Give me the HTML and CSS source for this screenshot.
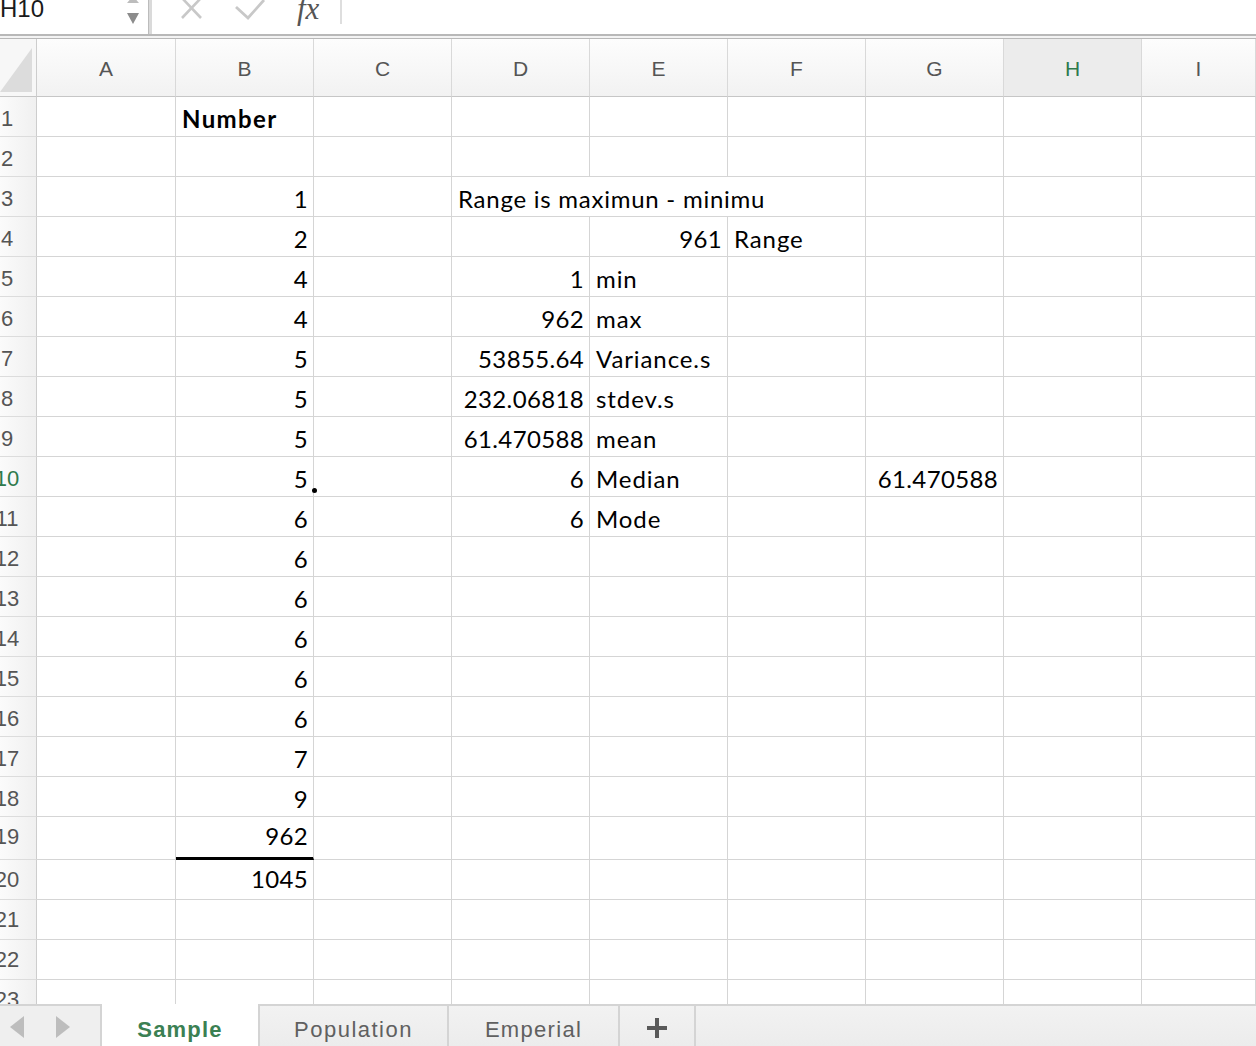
FILE: index.html
```html
<!DOCTYPE html>
<html>
<head>
<meta charset="utf-8">
<title>Sheet</title>
<link rel="stylesheet" href="styles.css">
</head>
<body>
<div class="fbar">
  <div class="namebox">
    <span class="nb-text">H10</span>
    <svg class="nb-arrows" width="14" height="26" viewBox="0 0 14 26"><polygon points="1,3 13,3 7,-4" fill="#bdbdbd"/><polygon points="1,13 13,13 7,24" fill="#8c8c8c"/></svg>
  </div>
  <div class="vsep"></div>
  <svg class="ic-x" width="24" height="22" viewBox="0 0 24 22"><path d="M2 -2 L21 18 M21 -2 L2 18" stroke="#c8c8c8" stroke-width="2.6" fill="none"/></svg>
  <svg class="ic-ok" width="30" height="22" viewBox="0 0 30 22"><path d="M1 7 L13 18 L29 0" stroke="#c8c8c8" stroke-width="2.8" fill="none"/></svg>
  <span class="fx">fx</span>
  <div class="vsep2"></div>
  <div class="finput"></div>
</div>
<div class="divider"></div>
<div class="sheet">
  <div class="r hd">
    <div class="corner"><svg width="36" height="57" viewBox="0 0 36 57"><polygon points="0,53 32,53 32,9" fill="#dcdcdc"/></svg></div>
    <div>A</div><div>B</div><div>C</div><div>D</div><div>E</div><div>F</div><div>G</div><div class="sel">H</div><div>I</div>
  </div>
  <div class="r"><div class="rh"><span>1</span></div><div></div><div class="bold">Number</div><div></div><div></div><div></div><div></div><div></div><div></div><div></div></div>
  <div class="r"><div class="rh"><span>2</span></div><div></div><div></div><div></div><div></div><div></div><div></div><div></div><div></div><div></div></div>
  <div class="r"><div class="rh"><span>3</span></div><div></div><div class="n">1</div><div></div><div class="span3">Range is maximun - minimu</div><div></div><div></div><div></div></div>
  <div class="r"><div class="rh"><span>4</span></div><div></div><div class="n">2</div><div></div><div></div><div class="n">961</div><div>Range</div><div></div><div></div><div></div></div>
  <div class="r"><div class="rh"><span>5</span></div><div></div><div class="n">4</div><div></div><div class="n">1</div><div>min</div><div></div><div></div><div></div><div></div></div>
  <div class="r"><div class="rh"><span>6</span></div><div></div><div class="n">4</div><div></div><div class="n">962</div><div>max</div><div></div><div></div><div></div><div></div></div>
  <div class="r"><div class="rh"><span>7</span></div><div></div><div class="n">5</div><div></div><div class="n">53855.64</div><div>Variance.s</div><div></div><div></div><div></div><div></div></div>
  <div class="r"><div class="rh"><span>8</span></div><div></div><div class="n">5</div><div></div><div class="n">232.06818</div><div>stdev.s</div><div></div><div></div><div></div><div></div></div>
  <div class="r"><div class="rh"><span>9</span></div><div></div><div class="n">5</div><div></div><div class="n">61.470588</div><div>mean</div><div></div><div></div><div></div><div></div></div>
  <div class="r"><div class="rh sel"><span>10</span></div><div></div><div class="n dotcell">5<i class="dot"></i></div><div></div><div class="n">6</div><div>Median</div><div></div><div class="n">61.470588</div><div></div><div></div></div>
  <div class="r"><div class="rh"><span>11</span></div><div></div><div class="n">6</div><div></div><div class="n">6</div><div>Mode</div><div></div><div></div><div></div><div></div></div>
  <div class="r"><div class="rh"><span>12</span></div><div></div><div class="n">6</div><div></div><div></div><div></div><div></div><div></div><div></div><div></div></div>
  <div class="r"><div class="rh"><span>13</span></div><div></div><div class="n">6</div><div></div><div></div><div></div><div></div><div></div><div></div><div></div></div>
  <div class="r"><div class="rh"><span>14</span></div><div></div><div class="n">6</div><div></div><div></div><div></div><div></div><div></div><div></div><div></div></div>
  <div class="r"><div class="rh"><span>15</span></div><div></div><div class="n">6</div><div></div><div></div><div></div><div></div><div></div><div></div><div></div></div>
  <div class="r"><div class="rh"><span>16</span></div><div></div><div class="n">6</div><div></div><div></div><div></div><div></div><div></div><div></div><div></div></div>
  <div class="r"><div class="rh"><span>17</span></div><div></div><div class="n">7</div><div></div><div></div><div></div><div></div><div></div><div></div><div></div></div>
  <div class="r"><div class="rh"><span>18</span></div><div></div><div class="n">9</div><div></div><div></div><div></div><div></div><div></div><div></div><div></div></div>
  <div class="r tall lo"><div class="rh"><span>19</span></div><div></div><div class="n thick">962</div><div></div><div></div><div></div><div></div><div></div><div></div><div></div></div>
  <div class="r lo"><div class="rh"><span>20</span></div><div></div><div class="n">1045</div><div></div><div></div><div></div><div></div><div></div><div></div><div></div></div>
  <div class="r lo"><div class="rh"><span>21</span></div><div></div><div></div><div></div><div></div><div></div><div></div><div></div><div></div><div></div></div>
  <div class="r lo"><div class="rh"><span>22</span></div><div></div><div></div><div></div><div></div><div></div><div></div><div></div><div></div><div></div></div>
  <div class="r lo"><div class="rh"><span>23</span></div><div></div><div></div><div></div><div></div><div></div><div></div><div></div><div></div><div></div></div>
</div>
<div class="tabbar">
  <div class="nav">
    <svg width="14" height="22" viewBox="0 0 14 22"><polygon points="14,0 14,22 0,11" fill="#bdbdbd"/></svg>
    <svg width="14" height="22" viewBox="0 0 14 22"><polygon points="0,0 0,22 14,11" fill="#bdbdbd"/></svg>
  </div>
  <div class="tab active w-sample">Sample</div>
  <div class="tab w-pop">Population</div>
  <div class="tab w-emp">Emperial</div>
  <div class="tab w-add"><svg width="20" height="20" viewBox="0 0 20 20"><rect x="0" y="8" width="20" height="4" fill="#595959"/><rect x="8" y="0" width="4" height="20" fill="#595959"/></svg></div>
  <div class="tab rest"></div>
</div>
</body>
</html>
```
FILE: styles.css
```css
* { box-sizing: border-box; margin: 0; padding: 0; }
html, body { width: 1256px; height: 1046px; overflow: hidden; background: #fff; }
body { display: flex; flex-direction: column; font-family: "Liberation Sans", Arial, sans-serif; }

/* formula bar */
.fbar { height: 34px; flex: none; display: flex; align-items: flex-start; overflow: hidden; background: #fff; }
.namebox { width: 148px; height: 34px; display: flex; justify-content: space-between; align-items: flex-start; }
.nb-text { font-size: 24px; line-height: 24px; margin-top: -3px; color: #1a1a1a; }
.nb-arrows { margin-right: 8px; }
.vsep { width: 4px; height: 34px; background: #dadada; border-left: 1px solid #bcbcbc; }
.ic-x { margin-left: 28px; }
.ic-ok { margin-left: 31px; }
.fx { margin-left: 32px; width: 30px; font-family: "Liberation Serif", "Times New Roman", serif; font-style: italic; font-size: 31px; line-height: 30px; margin-top: -6px; color: #555; }
.vsep2 { margin-left: 13px; width: 2px; height: 24px; background: #dedede; }
.finput { flex: 1; }

.divider { height: 5px; flex: none; border-top: 2px solid #b8b8b8; border-bottom: 1px solid #b8b8b8; background: #f3f3f3; }

/* sheet grid */
.sheet { flex: 1; overflow: hidden; }
.r { display: grid; grid-template-columns: 37px 139px repeat(7, 138px) 1fr; height: 40px; }
.r > div {
  border-right: 1px solid #d5d5d5; border-bottom: 1px solid #d5d5d5;
  overflow: hidden; white-space: nowrap;
  font-family: Lato, "Open Sans", sans-serif; font-size: 24px; line-height: 33px;
  padding: 5px 5px 0 6px; color: #000; letter-spacing: 0.9px;
}
.r > div.n { text-align: right; letter-spacing: 0.35px; padding-right: 5px; }
.r > div.bold { font-weight: 700; letter-spacing: 1.4px; }
.r > div.span3 { grid-column: span 3; letter-spacing: 0.75px; }
.r.tall { height: 43px; }
.r > div.thick { border-bottom: 3px solid #000; }
.r.lo > div { padding-top: 2px; }
.r > div.dotcell { overflow: visible; position: relative; }
.dot { position: absolute; right: -4px; bottom: 3px; width: 5px; height: 5px; border-radius: 50%; background: #000; }

/* column header */
.r.hd { height: 58px; }
.r.hd > div {
  background: linear-gradient(#fdfdfd, #f2f2f2);
  text-align: center; font-family: "Liberation Sans", Arial, sans-serif;
  font-size: 21px; line-height: 52px; padding: 4px 0 0; color: #555; letter-spacing: 0;
  border-bottom-color: #c6c6c6; border-right-color: #d9d9d9;
}
.r.hd > div.sel { background: #ececec; color: #2f7a4c; }
.r.hd > div.corner { padding: 0; background: #f7f7f7; border-right-color: #cdcdcd; }
.corner svg { display: block; }

/* row header */
.r > div.rh {
  padding: 5px 0 0; background: linear-gradient(90deg, #fbfbfb, #f0f0f0);
  font-family: "Liberation Sans", Arial, sans-serif; font-size: 22px; color: #555; letter-spacing: 0;
  border-right-color: #cdcdcd; border-bottom-color: #dcdcdc;
}
.r.lo > div.rh { padding-top: 3px; }
.rh span { display: block; width: 58px; margin-left: -22px; text-align: center; }
.r > div.rh.sel { color: #2f7a4c; }

/* tab bar */
.tabbar { height: 42px; flex: none; display: flex; background: #efefef; }
.nav { width: 100px; display: flex; align-items: center; gap: 32px; padding-left: 10px; border-top: 2px solid #d4d4d4; padding-top: 2px; }
.tab {
  border-left: 2px solid #d4d4d4; border-top: 2px solid #d4d4d4;
  text-align: center; font-size: 22px; letter-spacing: 1.3px; line-height: 35px; padding-top: 6px;
  color: #606060; background: linear-gradient(#f2f2f2, #ececec);
}
.tab.active { border-top: none; padding-top: 8px; background: #fff; color: #3b8053; font-weight: 700; letter-spacing: 1.2px; }
.w-sample { width: 158px; }
.w-pop { width: 189px; letter-spacing: 1.5px; }
.w-emp { width: 171px; }
.w-add { width: 76px; display: flex; align-items: center; justify-content: center; padding-top: 4px; }
.tab.rest { flex: 1; }
```
